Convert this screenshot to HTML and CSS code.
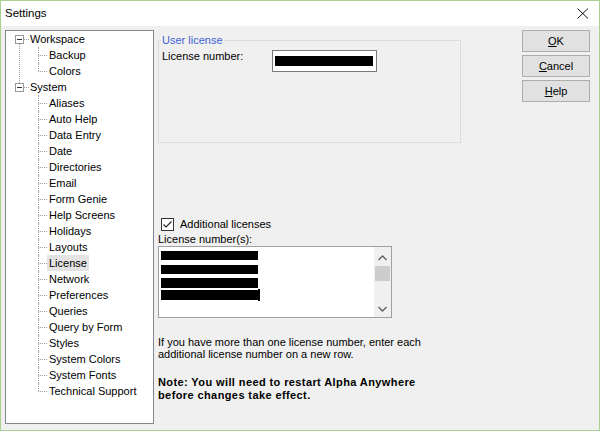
FILE: index.html
```html
<!DOCTYPE html>
<html>
<head>
<meta charset="utf-8">
<title>Settings</title>
<link rel="stylesheet" href="styles.css">
</head>
<body>
<div class="window">
  <div class="titlebar">
    <span class="title">Settings</span>
    <span class="close"><svg width="12" height="11" viewBox="0 0 12 11"><path d="M0.5 0.5 L11 10.5 M11 0.5 L0.5 10.5" stroke="#111" stroke-width="1" fill="none"/></svg></span>
  </div>
  <div class="content">
    <div class="tree">
      <div class="group g-first">
        <div class="row root"><span class="exp"></span><span class="hr"></span><span class="lbl">Workspace</span></div>
        <div class="row child"><span class="hc"></span><span class="lbl">Backup</span></div>
        <div class="row child last"><span class="hc"></span><span class="lbl">Colors</span></div>
      </div>
      <div class="group">
        <div class="row root"><span class="exp"></span><span class="hr"></span><span class="lbl">System</span></div>
        <div class="row child"><span class="hc"></span><span class="lbl">Aliases</span></div>
        <div class="row child"><span class="hc"></span><span class="lbl">Auto Help</span></div>
        <div class="row child"><span class="hc"></span><span class="lbl">Data Entry</span></div>
        <div class="row child"><span class="hc"></span><span class="lbl">Date</span></div>
        <div class="row child"><span class="hc"></span><span class="lbl">Directories</span></div>
        <div class="row child"><span class="hc"></span><span class="lbl">Email</span></div>
        <div class="row child"><span class="hc"></span><span class="lbl">Form Genie</span></div>
        <div class="row child"><span class="hc"></span><span class="lbl">Help Screens</span></div>
        <div class="row child"><span class="hc"></span><span class="lbl">Holidays</span></div>
        <div class="row child"><span class="hc"></span><span class="lbl">Layouts</span></div>
        <div class="row child"><span class="hc"></span><span class="lbl selected">License</span></div>
        <div class="row child"><span class="hc"></span><span class="lbl">Network</span></div>
        <div class="row child"><span class="hc"></span><span class="lbl">Preferences</span></div>
        <div class="row child"><span class="hc"></span><span class="lbl">Queries</span></div>
        <div class="row child"><span class="hc"></span><span class="lbl">Query by Form</span></div>
        <div class="row child"><span class="hc"></span><span class="lbl">Styles</span></div>
        <div class="row child"><span class="hc"></span><span class="lbl">System Colors</span></div>
        <div class="row child"><span class="hc"></span><span class="lbl">System Fonts</span></div>
        <div class="row child last"><span class="hc"></span><span class="lbl">Technical Support</span></div>
      </div>
    </div>

    <div class="main">
      <fieldset class="groupbox">
        <legend>User license</legend>
        <div class="field">
          <span class="field-label">License number:</span>
          <span class="input"><span class="redact"></span></span>
        </div>
      </fieldset>

      <div class="check-row">
        <span class="checkbox"><svg width="11" height="11" viewBox="0 0 11 11"><path d="M1.5 5.5 L4 8 L9.5 2.5" stroke="#222" stroke-width="1.1" fill="none"/></svg></span>
        <span class="check-label">Additional licenses</span>
      </div>
      <div class="list-label">License number(s):</div>
      <div class="textarea">
        <div class="lines">
          <span class="redact-line"></span>
          <span class="redact-line l2"></span>
          <span class="redact-line l3"></span>
          <span class="redact-line l4"><span class="caret"></span></span>
        </div>
        <div class="scrollbar">
          <span class="arrow up"><svg width="9" height="6" viewBox="0 0 9 6"><path d="M0.5 5 L4.5 1 L8.5 5" stroke="#606060" stroke-width="1.3" fill="none"/></svg></span>
          <span class="thumb"></span>
          <span class="track"></span>
          <span class="arrow down"><svg width="9" height="6" viewBox="0 0 9 6"><path d="M0.5 1 L4.5 5 L8.5 1" stroke="#606060" stroke-width="1.3" fill="none"/></svg></span>
        </div>
      </div>
      <p class="help">If you have more than one license number, enter each additional license number on a new row.</p>
      <p class="note">Note: You will need to restart Alpha Anywhere before changes take effect.</p>
    </div>

    <div class="buttons">
      <button class="btn"><u>O</u>K</button>
      <button class="btn"><u>C</u>ancel</button>
      <button class="btn"><u>H</u>elp</button>
    </div>
  </div>
</div>
</body>
</html>
```

FILE: styles.css
```css
html, body {
  margin: 0;
  padding: 0;
  background: #f0f0f0;
}

.window {
  box-sizing: border-box;
  width: 600px;
  height: 431px;
  border: 1px solid #a9d08e;
  display: flex;
  flex-direction: column;
  font-family: "Liberation Sans", Arial, sans-serif;
  font-size: 11px;
  color: #000;
  overflow: hidden;
}

.titlebar {
  height: 25px;
  background: #fff;
  display: flex;
  align-items: center;
  padding: 0 9px 0 4px;
  flex: none;
}

.title {
  font-size: 11.5px;
  flex: 1;
  padding-bottom: 1px;
}

.close {
  display: flex;
  width: 12px;
  height: 11px;
  margin-right: 1px;
}

.content {
  flex: 1;
  display: flex;
  padding: 4px 9px 6px 4px;
  background: #f0f0f0;
}

/* tree */
.tree {
  box-sizing: border-box;
  width: 149px;
  height: 394px;
  background: #fff;
  border: 1px solid #828790;
  flex: none;
}

.group {
  position: relative;
}

.g-first::before {
  content: "";
  position: absolute;
  left: 13px;
  top: 13px;
  height: 39px;
  border-left: 1px dotted #a0a0a0;
}

.row {
  position: relative;
  height: 16px;
  display: flex;
  align-items: center;
  line-height: 16px;
  white-space: nowrap;
}

.row.root {
  padding-left: 9px;
}

.exp {
  position: relative;
  box-sizing: border-box;
  width: 9px;
  height: 9px;
  border: 1px solid #989898;
  background: #fff;
  align-self: flex-start;
  margin-top: 4px;
}

.exp::after {
  content: "";
  position: absolute;
  left: 1px;
  top: 3px;
  width: 5px;
  height: 1px;
  background: #333;
}

.hr {
  width: 5px;
  border-top: 1px dotted #a0a0a0;
  margin-top: 1px;
}

.row.child {
  padding-left: 32px;
}

.row.child::before {
  content: "";
  position: absolute;
  left: 32px;
  top: 0;
  bottom: 0;
  border-left: 1px dotted #a0a0a0;
}

.row.child.last::before {
  bottom: 8px;
}

.hc {
  width: 9px;
  border-top: 1px dotted #a0a0a0;
  margin-top: 1px;
}

.lbl {
  padding: 0 2px 0 1px;
  height: 16px;
}

.row.child .lbl {
  padding: 0 2px 0 2px;
}

.lbl.selected {
  background: #e3e3e3;
}

/* main panel */
.main {
  width: 303px;
  margin-left: 4px;
  display: flex;
  flex-direction: column;
  flex: none;
}

.groupbox {
  box-sizing: border-box;
  margin: 4px 0 0 0;
  padding: 0 3px;
  width: 303px;
  height: 109px;
  border: 1px solid #dcdcdc;
  min-width: 0;
}

.groupbox legend {
  color: #3f62d6;
  padding: 0 1px;
  margin-left: -1px;
  line-height: 13px;
}

.field {
  display: flex;
  align-items: flex-start;
  margin-top: 3px;
}

.field-label {
  width: 110px;
  line-height: 13px;
  margin-top: 0;
}

.input {
  box-sizing: border-box;
  width: 105px;
  height: 22px;
  border: 1px solid #7a7a7a;
  background: #fff;
  padding: 5px 3px 0 2px;
}

.redact {
  display: block;
  height: 10px;
  background: #000;
}

.check-row {
  display: flex;
  align-items: center;
  margin-top: 75px;
  height: 13px;
}

.checkbox {
  box-sizing: border-box;
  width: 13px;
  height: 13px;
  border: 1px solid #333;
  background: #fff;
  margin-left: 3px;
  display: flex;
  align-items: center;
  justify-content: center;
}

.check-label {
  margin-left: 6px;
  line-height: 13px;
}

.list-label {
  margin-top: 2px;
  line-height: 13px;
}

.textarea {
  box-sizing: border-box;
  width: 234px;
  height: 72px;
  border: 1px solid #a0a0a0;
  background: #fff;
  display: flex;
}

.lines {
  flex: 1;
  padding: 4px 0 0 2px;
  display: flex;
  flex-direction: column;
}

.redact-line {
  display: block;
  width: 97px;
  height: 9px;
  background: #000;
  position: relative;
}

.redact-line.l2 { margin-top: 5px; }
.redact-line.l3 { margin-top: 4px; height: 10px; }
.redact-line.l4 { margin-top: 2px; height: 10px; }

.caret {
  position: absolute;
  right: -2px;
  top: -1px;
  width: 2px;
  height: 12px;
  background: #000;
}

.scrollbar {
  width: 17px;
  background: #f0f0f0;
  display: flex;
  flex-direction: column;
}

.arrow {
  height: 17px;
  display: flex;
  align-items: center;
  justify-content: center;
  flex: none;
}

.arrow.up { margin-top: 2px; }

.thumb {
  height: 15px;
  margin: 0 1px;
  background: #cdcdcd;
  flex: none;
}

.track {
  flex: 1;
}

.help {
  margin: 18px 0 0 0;
  line-height: 12px;
  width: 270px;
}

.note {
  margin: 16px 0 0 0;
  line-height: 13px;
  font-weight: bold;
  letter-spacing: 0.4px;
  width: 280px;
}

/* buttons */
.buttons {
  margin-left: auto;
  display: flex;
  flex-direction: column;
  gap: 3px;
  flex: none;
}

.btn {
  box-sizing: border-box;
  width: 68px;
  height: 22px;
  background: #e1e1e1;
  border: 1px solid #adadad;
  font-family: "Liberation Sans", Arial, sans-serif;
  font-size: 11px;
  color: #000;
  padding: 0;
  border-radius: 0;
}
```
